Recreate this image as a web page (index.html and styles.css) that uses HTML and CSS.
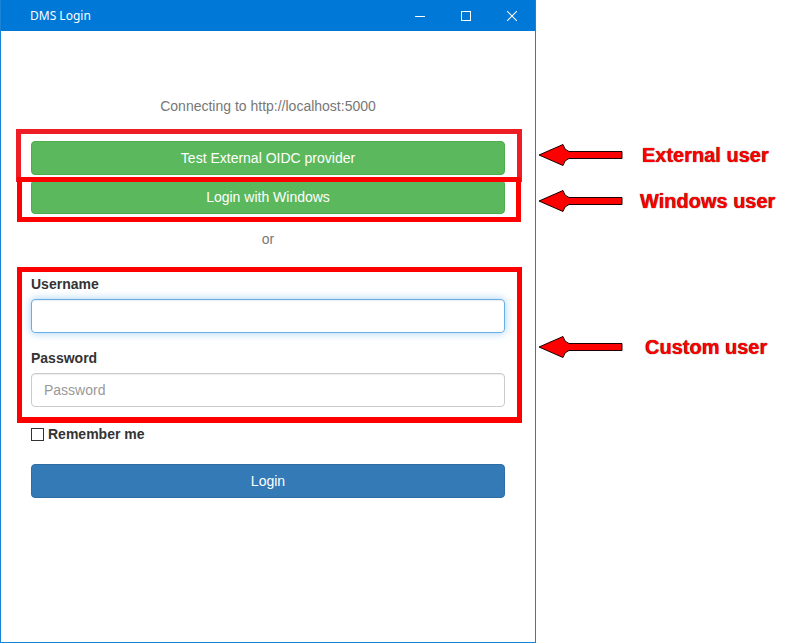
FILE: index.html
```html
<!DOCTYPE html>
<html>
<head>
<meta charset="utf-8">
<title>DMS Login</title>
<link rel="stylesheet" href="styles.css">
</head>
<body>
<div class="screen">
  <div class="window">
    <div class="titlebar">
      <span class="title">DMS Login</span>
      <div class="controls">
        <span class="ctl"><svg width="10" height="10" viewBox="0 0 10 10"><path d="M0 5.5H10" stroke="#fff" stroke-width="1"/></svg></span>
        <span class="ctl"><svg width="10" height="10" viewBox="0 0 10 10"><rect x="0.5" y="0.5" width="9" height="9" fill="none" stroke="#fff" stroke-width="1"/></svg></span>
        <span class="ctl"><svg width="10" height="10" viewBox="0 0 10 10"><path d="M0 0L10 10M10 0L0 10" stroke="#fff" stroke-width="1.1"/></svg></span>
      </div>
    </div>
    <div class="content">
      <p class="connecting">Connecting to http://localhost:5000</p>
      <button class="btn btn-success">Test External OIDC provider</button>
      <button class="btn btn-success btn-next">Login with Windows</button>
      <p class="or">or</p>
      <label class="field-label">Username</label>
      <div class="input input-focus"></div>
      <label class="field-label field-label-2">Password</label>
      <div class="input"><span class="placeholder">Password</span></div>
      <div class="check"><span class="box"></span><span class="check-text">Remember me</span></div>
      <button class="btn btn-primary">Login</button>
    </div>
  </div>

  <div class="mark mark-1"></div>
  <div class="mark mark-2"></div>
  <div class="mark mark-3"></div>

  <div class="note note-1">
    <svg class="arrow" width="86" height="24" viewBox="0 0 86 24"><path d="M1 12 L25 1.5 Q26 7 31 8.5 L84 8.5 L84 15.5 L31 15.5 Q26 17 25 22.5 Z" fill="#ff0000" stroke="#1a0000" stroke-width="1"/></svg>
    <span class="note-text t1">External user</span>
  </div>
  <div class="note note-2">
    <svg class="arrow" width="86" height="24" viewBox="0 0 86 24"><path d="M1 12 L25 1.5 Q26 7 31 8.5 L84 8.5 L84 15.5 L31 15.5 Q26 17 25 22.5 Z" fill="#ff0000" stroke="#1a0000" stroke-width="1"/></svg>
    <span class="note-text t2">Windows user</span>
  </div>
  <div class="note note-3">
    <svg class="arrow" width="86" height="24" viewBox="0 0 86 24"><path d="M1 12 L25 1.5 Q26 7 31 8.5 L84 8.5 L84 15.5 L31 15.5 Q26 17 25 22.5 Z" fill="#ff0000" stroke="#1a0000" stroke-width="1"/></svg>
    <span class="note-text t3">Custom user</span>
  </div>
</div>
</body>
</html>
```

FILE: styles.css
```css
* { box-sizing: border-box; }
html, body { margin: 0; padding: 0; background: #fff; }
.screen { position: relative; width: 797px; height: 643px; overflow: hidden; }

.window {
  width: 536px;
  height: 643px;
  border: 1px solid #1883d7;
  border-top-color: #0078d7;
  background: #fff;
  display: flex;
  flex-direction: column;
}
.titlebar {
  height: 30px;
  background: #0078d7;
  display: flex;
  align-items: center;
  flex-shrink: 0;
}
.title {
  font-family: "Noto Sans", "DejaVu Sans", sans-serif;
  font-size: 12px;
  color: #fff;
  padding-left: 29px;
  flex: 1;
  line-height: 30px;
}
.controls { display: flex; height: 30px; }
.ctl { width: 46px; height: 30px; display: flex; align-items: center; justify-content: center; }
.ctl svg { display: block; }

.content {
  padding: 65px 30px 0 30px;
  display: flex;
  flex-direction: column;
  font-family: "Liberation Sans", Arial, sans-serif;
  font-size: 14px;
  color: #333;
}
.connecting, .or {
  margin: 0;
  text-align: center;
  color: #777;
  line-height: 20px;
}
.btn {
  display: block;
  width: 100%;
  height: 34px;
  border: 1px solid transparent;
  border-radius: 4px;
  font-family: "Liberation Sans", Arial, sans-serif;
  font-size: 14px;
  line-height: 20px;
  color: #fff;
  padding: 6px 12px;
  text-align: center;
}
.btn-success { background: #5cb85c; border-color: #4cae4c; margin-top: 25px; }
.btn-next { margin-top: 5px; }
.or { margin-top: 15px; }
.field-label {
  display: block;
  font-weight: bold;
  line-height: 20px;
  margin-top: 25px;
  color: #333;
}
.field-label-2 { margin-top: 15px; }
.input {
  margin-top: 5px;
  height: 34px;
  border: 1px solid #ccc;
  border-radius: 4px;
  padding: 6px 12px;
  line-height: 20px;
  box-shadow: inset 0 1px 1px rgba(0,0,0,.075);
}
.input-focus {
  border-color: #66afe9;
  box-shadow: inset 0 1px 1px rgba(0,0,0,.075), 0 0 8px rgba(102,175,233,.6);
}
.placeholder { color: #999; }
.check {
  margin-top: 17px;
  display: flex;
  align-items: center;
  height: 20px;
}
.box {
  width: 13px;
  height: 13px;
  border: 1px solid #333;
  background: #fff;
  margin-right: 4px;
}
.check-text { font-weight: bold; color: #333; }
.btn-primary { background: #337ab7; border-color: #2e6da4; margin-top: 20px; }

.mark { position: absolute; border: 5px solid #ff0000; }
.mark-1 { left: 16px; top: 129px; width: 506px; height: 53px; border-color: #ee1c25; }
.mark-2 { left: 17px; top: 177px; width: 504px; height: 45px; }
.mark-3 { left: 17px; top: 267px; width: 505px; height: 156px; border-width: 5px 5px 6px 5px; }

.note {
  position: absolute;
  left: 538px;
  display: flex;
  align-items: center;
  height: 24px;
}
.note-1 { top: 143px; }
.note-2 { top: 189px; }
.note-3 { top: 335px; }
.arrow { display: block; flex-shrink: 0; }
.note-text {
  font-family: "Liberation Sans", Arial, sans-serif;
  font-weight: bold;
  font-size: 20px;
  color: #ff0000;
  text-shadow: 0 0 1px #300;
  white-space: nowrap;
}
.t1 { margin-left: 18px; }
.t2 { margin-left: 16px; }
.t3 { margin-left: 21px; }
```
